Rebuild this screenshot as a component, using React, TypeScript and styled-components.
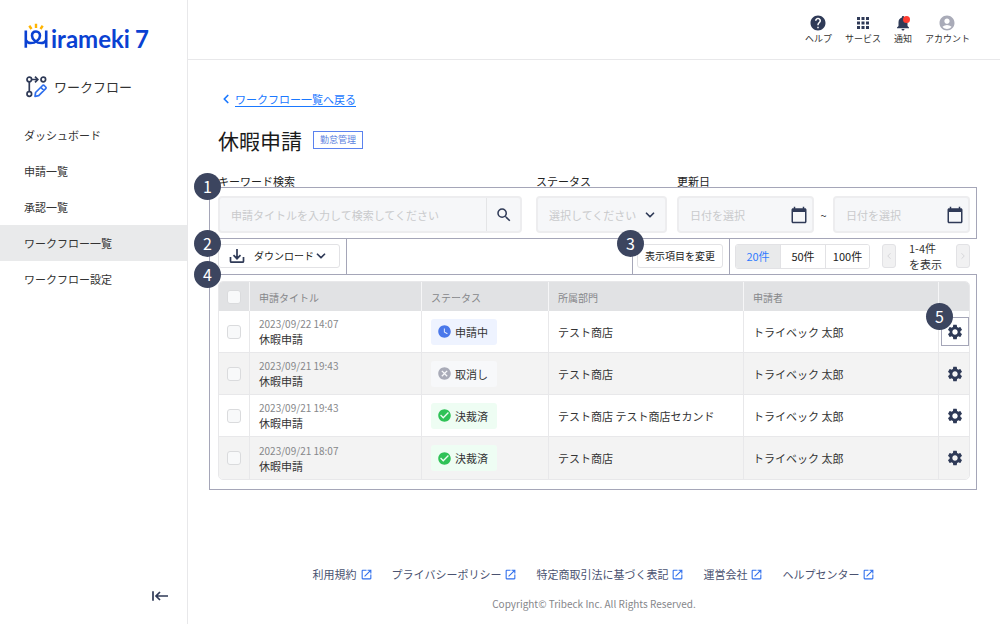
import React from 'react';
import styled, { createGlobalStyle } from 'styled-components';
import {
  MdAccountCircle,
  MdApps,
  MdCalendarToday,
  MdCancel,
  MdCheckCircle,
  MdHelp,
  MdNotifications,
  MdOpenInNew,
  MdSearch,
  MdSettings,
  MdWatchLater,
} from 'react-icons/md';
import { ChevronDown, ChevronLeft, ChevronRight } from 'lucide-react';

const navy = '#2f3a57';
const line = '#e8e8ea';
const blue = '#2f6fed';

const GlobalStyle = createGlobalStyle`
  *, *::before, *::after { box-sizing: border-box; }
  body {
    margin: 0;
    background: #fff;
    color: #333;
    font-family: "Noto Sans CJK JP", "Noto Sans", sans-serif;
    font-size: 11px;
    line-height: 16px;
  }
  button, input, select { font: inherit; color: inherit; margin: 0; }
  button { cursor: pointer; padding: 0; }
  svg { display: block; flex: none; }
`;

const Page = styled.div`
  display: flex;
  min-height: 100vh;
`;

/* Sidebar */

const Sidebar = styled.aside`
  flex: none;
  width: 188px;
  display: flex;
  flex-direction: column;
  border-right: 1px solid ${line};
`;

const Logo = styled.a`
  display: flex;
  align-items: flex-end;
  height: 50px;
  padding-left: 23px;
  color: #0a41d2;
  text-decoration: none;
`;

const Wordmark = styled.span`
  display: flex;
  gap: 5px;
  padding-left: 1px;
  font-family: Lato, sans-serif;
  font-size: 24px;
  font-weight: 700;
  line-height: 22px;
`;

const AppName = styled.div`
  display: flex;
  align-items: center;
  gap: 7px;
  margin-top: 26px;
  padding-left: 26px;
  height: 22px;
  font-size: 13px;
`;

const Menu = styled.nav`
  margin-top: 19px;
  display: flex;
  flex-direction: column;
`;

const MenuItem = styled.a<{ $active?: boolean }>`
  padding: 10px 24px;
  color: #333;
  text-decoration: none;
  background: ${(p) => (p.$active ? '#e9eaeb' : 'transparent')};
`;

const Collapse = styled.button`
  align-self: flex-end;
  margin: auto 18px 20px 0;
  border: 0;
  background: none;
  color: ${navy};
`;

/* Main column */

const Main = styled.div`
  flex: 1;
  min-width: 0;
  display: flex;
  flex-direction: column;
`;

const Header = styled.header`
  display: flex;
  justify-content: flex-end;
  gap: 13px;
  height: 60px;
  padding: 14px 30px 0;
  border-bottom: 1px solid ${line};
`;

const HeaderButton = styled.button<{ $muted?: boolean }>`
  position: relative;
  display: flex;
  flex-direction: column;
  align-items: center;
  height: 34px;
  border: 0;
  background: none;
  font-size: 9px;
  line-height: 14px;
  & > svg { color: ${(p) => (p.$muted ? '#a9abb8' : navy)}; }
`;

const Dot = styled.span`
  position: absolute;
  top: 2px;
  right: 2px;
  width: 7px;
  height: 7px;
  border-radius: 50%;
  background: #ff3b30;
`;

const Content = styled.main`
  padding: 30px 30px 0;
`;

const BackLink = styled.a`
  display: flex;
  align-items: center;
  gap: 2px;
  width: max-content;
  padding-left: 1px;
  height: 18px;
  color: #1a78ff;
  text-decoration: none;
  span {
    text-decoration: underline;
    text-underline-offset: 2px;
  }
`;

const TitleRow = styled.div`
  display: flex;
  align-items: center;
  gap: 11px;
  margin-top: 17px;
`;

const Title = styled.h1`
  margin: 0;
  color: #1a1a1a;
  font-size: 21px;
  font-weight: 400;
  line-height: 30px;
`;

const Tag = styled.span`
  padding: 0 6px;
  border: 1px solid #5b82ee;
  color: #5b7fe0;
  font-size: 9px;
  line-height: 16px;
`;

/* Numbered callouts */

const Callout = styled.div<{ $inset: string }>`
  position: absolute;
  inset: ${(p) => p.$inset};
  z-index: 1;
  border: 1px solid #a5a6b8;
  pointer-events: none;
`;

const CalloutNumber = styled.span<{ $top: number }>`
  position: absolute;
  top: ${(p) => p.$top}px;
  left: -16px;
  z-index: 2;
  width: 27px;
  height: 27px;
  border-radius: 50%;
  background: #3c455f;
  color: #fff;
  font-size: 16px;
  line-height: 26px;
  text-align: center;
`;

/* Filters */

const Filters = styled.form`
  position: relative;
  display: grid;
  grid-template-columns: 308fr 131fr 293fr;
  column-gap: 10px;
  margin-top: 18px;
`;

const Field = styled.div<{ $gapAfter?: number }>`
  display: flex;
  flex-direction: column;
  gap: 7px;
  min-width: 0;
  margin-right: ${(p) => p.$gapAfter ?? 0}px;
`;

const Label = styled.label`
  color: #222;
`;

const Box = styled.div`
  position: relative;
  display: flex;
  align-items: center;
  flex: 1;
  min-width: 0;
  height: 37px;
  border: 2px solid #ededef;
  border-radius: 4px;
  background: #f6f7f9;
`;

const TextInput = styled.input`
  flex: 1;
  min-width: 0;
  height: 100%;
  padding: 0 11px;
  border: 0;
  outline: 0;
  background: none;
  &::placeholder { color: #c9cacc; opacity: 1; }
`;

const SearchButton = styled.button`
  display: grid;
  place-items: center;
  width: 34px;
  height: 100%;
  border: 0;
  border-left: 1px solid #e4e5e7;
  background: none;
  color: ${navy};
`;

const CalendarButton = styled.button`
  padding: 0 4px;
  border: 0;
  background: none;
  color: ${navy};
`;

const Select = styled.select`
  appearance: none;
  width: 100%;
  height: 100%;
  padding: 0 26px 0 11px;
  border: 0;
  outline: 0;
  background: none;
  color: #c9cacc;
`;

const SelectArrow = styled.span`
  position: absolute;
  right: 8px;
  color: ${navy};
  pointer-events: none;
`;

const DateRange = styled.div`
  display: flex;
  align-items: center;
`;

const Tilde = styled.span`
  width: 19px;
  text-align: center;
`;

/* Toolbar */

const Toolbar = styled.div`
  display: flex;
  align-items: center;
  gap: 12px;
  margin-top: 7px;
  height: 32px;
`;

const ToolSlot = styled.div<{ $push?: boolean }>`
  position: relative;
  margin-right: ${(p) => (p.$push ? 'auto' : '0')};
`;

const ToolButton = styled.button<{ $pad: string }>`
  display: flex;
  align-items: center;
  height: 24px;
  padding: ${(p) => p.$pad};
  border: 1px solid #e2e2e5;
  border-radius: 3px;
  background: #fff;
  color: #222;
  font-size: 10px;
  svg { color: ${navy}; }
`;

const ButtonText = styled.span`
  padding-left: 9px;
`;

const Segments = styled.div`
  display: flex;
  border: 1px solid #e2e2e5;
  border-radius: 3px;
  overflow: hidden;
`;

const Segment = styled.button<{ $on?: boolean }>`
  width: 45px;
  height: 23px;
  border: 0;
  background: ${(p) => (p.$on ? '#e9eaeb' : '#fff')};
  color: ${(p) => (p.$on ? '#2f7bff' : '#222')};
  &:first-child, &:last-child { width: 44px; }
  & + & { border-left: 1px solid #e2e2e5; }
`;

const Pager = styled.div`
  display: flex;
  align-items: center;
  gap: 13px;
`;

const PageButton = styled.button`
  display: grid;
  place-items: center;
  width: 14px;
  height: 24px;
  border: 1px solid #e2e2e5;
  border-radius: 3px;
  background: #f1f1f2;
  color: #d0d0d4;
`;

const PageText = styled.span`
  width: 34px;
`;

/* Table */

const TableArea = styled.div`
  position: relative;
  margin-top: 9px;
`;

const Table = styled.table`
  width: 100%;
  table-layout: fixed;
  border-collapse: separate;
  border-spacing: 0;
  border: 1px solid ${line};
  border-radius: 5px;
  overflow: hidden;
`;

const Th = styled.th`
  height: 29px;
  padding: 3px 9px 0;
  background: #e1e2e4;
  color: #86878a;
  font-size: 10px;
  font-weight: 400;
  text-align: left;
  &:first-child { padding: 1px 8px 0; }
  & + & { border-left: 1px solid #f6f6f7; }
`;

const Tr = styled.tr`
  &:nth-child(even) { background: #f3f3f3; }
`;

const Td = styled.td`
  height: 42px;
  padding: 0 9px;
  border-bottom: 1px solid ${line};
  &:first-child { padding: 0 8px; }
  tr:last-child > & { border-bottom: 0; }
  & + & { border-left: 1px solid ${line}; }
`;

const Stamp = styled.div`
  color: #86878a;
  font-size: 10px;
  line-height: 15px;
`;

const Checkbox = styled.input`
  appearance: none;
  display: block;
  width: 14px;
  height: 14px;
  margin: 0;
  border: 1px solid #dadbdd;
  border-radius: 3px;
  background: #f8f9fa;
`;

const Status = styled.span<{ $bg: string; $fg: string }>`
  display: flex;
  align-items: center;
  gap: 3px;
  width: 66px;
  height: 26px;
  padding-left: 6px;
  border-radius: 3px;
  background: ${(p) => p.$bg};
  svg { color: ${(p) => p.$fg}; }
`;

const GearCell = styled(Td)`
  padding: 0 0 0 2px;
`;

const GearButton = styled.button`
  position: relative;
  display: grid;
  place-items: center;
  width: 28px;
  height: 29px;
  border: 0;
  background: none;
  color: ${navy};
`;

/* Footer */

const Footer = styled.footer`
  display: flex;
  flex-direction: column;
  align-items: center;
  gap: 14px;
  margin-top: auto;
  padding: 24px 0 12px;
  color: #85868a;
  font-size: 10px;
`;

const FooterLinks = styled.nav`
  display: flex;
  gap: 19px;
`;

const FooterLink = styled.a`
  display: flex;
  align-items: center;
  gap: 3px;
  color: #4a5270;
  font-size: 11px;
  text-decoration: none;
  svg { color: ${blue}; }
`;

const LogoMark = () => (
  <svg width="27" height="27" viewBox="-1 0 27 27" fill="none" strokeWidth="2.600" aria-hidden="true">
    <path stroke="#0a41d2" d="M1.800 7.500v17.200M22.200 7.500v17.200" />
    <path
      stroke="#0a41d2"
      d="M2 17.300c1 1.800 2.600 2.700 4.600 2.700 5 0 9.400-3.600 9.400-7.300 0-2.600-1.700-4.200-4-4.200s-4 1.600-4 4.200c0 3.700 4.400 7.300 9.400 7.300 2 0 3.600-.900 4.600-2.700"
    />
    <path stroke="#ffb400" strokeWidth="2.400" d="M5.300 2.800l2.200 3.200M12 .700v4.200M18.700 2.800l-2.200 3.200" />
  </svg>
);

const WorkflowIcon = () => (
  <svg width="21" height="22" viewBox="0 0 21 22" fill="none" stroke={navy} strokeWidth="1.700" aria-hidden="true">
    <circle cx="3.300" cy="3.500" r="2.300" />
    <circle cx="17.300" cy="3.500" r="2.300" />
    <circle cx="3.300" cy="18" r="2.300" />
    <path d="M3.300 5.800v9.900M5.600 3.500h6M9 .700l2.800 2.800-2.800 2.800" />
    <path stroke={blue} strokeLinejoin="round" d="M9 20.300l.600-3.800 7-7q.800-.700 1.600 0l1.500 1.500q.800.800 0 1.600l-7 7zM14.800 11.300l3.200 3.200" />
  </svg>
);

const CollapseIcon = () => (
  <svg width="18" height="16" viewBox="0 0 18 16" fill="none" stroke="currentColor" strokeWidth="1.700" aria-hidden="true">
    <path d="M2 3.300v9.400M5 8h12M9 4L5 8l4 4" />
  </svg>
);

const statuses = {
  pending: { text: '申請中', bg: '#eef3ff', fg: '#4a78ea', Icon: MdWatchLater },
  cancelled: { text: '取消し', bg: '#f7f8fa', fg: '#a9abb8', Icon: MdCancel },
  approved: { text: '決裁済', bg: '#eefdf3', fg: '#2fc257', Icon: MdCheckCircle },
};

const rows: { time: string; status: keyof typeof statuses; dept: string }[] = [
  { time: '2023/09/22 14:07', status: 'pending', dept: 'テスト商店' },
  { time: '2023/09/21 19:43', status: 'cancelled', dept: 'テスト商店' },
  { time: '2023/09/21 19:43', status: 'approved', dept: 'テスト商店 テスト商店セカンド' },
  { time: '2023/09/21 18:07', status: 'approved', dept: 'テスト商店' },
];

const menu = ['ダッシュボード', '申請一覧', '承認一覧', 'ワークフロー一覧', 'ワークフロー設定'];
const footerLinks = ['利用規約', 'プライバシーポリシー', '特定商取引法に基づく表記', '運営会社', 'ヘルプセンター'];

const DateField = ({ id, label }: { id: string; label?: string }) => (
  <Box>
    <TextInput id={id} size={1} placeholder="日付を選択" aria-label={label} />
    <CalendarButton type="button" aria-label="カレンダー">
      <MdCalendarToday size={18} />
    </CalendarButton>
  </Box>
);

export default function App() {
  return (
    <Page>
      <GlobalStyle />
      <Sidebar>
        <Logo href="#">
          <LogoMark />
          <Wordmark>
            <span>irameki</span>
            <span>7</span>
          </Wordmark>
        </Logo>
        <AppName>
          <WorkflowIcon />
          ワークフロー
        </AppName>
        <Menu>
          {menu.map((m) => (
            <MenuItem key={m} href="#" $active={m === 'ワークフロー一覧'}>
              {m}
            </MenuItem>
          ))}
        </Menu>
        <Collapse type="button" aria-label="メニューを閉じる">
          <CollapseIcon />
        </Collapse>
      </Sidebar>

      <Main>
        <Header>
          <HeaderButton>
            <MdHelp size={18} />
            ヘルプ
          </HeaderButton>
          <HeaderButton>
            <MdApps size={18} />
            サービス
          </HeaderButton>
          <HeaderButton>
            <MdNotifications size={18} />
            <Dot />
            通知
          </HeaderButton>
          <HeaderButton $muted>
            <MdAccountCircle size={18} />
            アカウント
          </HeaderButton>
        </Header>

        <Content>
          <BackLink href="#">
            <ChevronLeft size={14} strokeWidth={3} />
            <span>ワークフロー一覧へ戻る</span>
          </BackLink>
          <TitleRow>
            <Title>休暇申請</Title>
            <Tag>勤怠管理</Tag>
          </TitleRow>

          <Filters onSubmit={(e) => e.preventDefault()}>
            <Field $gapAfter={4}>
              <Label htmlFor="keyword">キーワード検索</Label>
              <Box>
                <TextInput id="keyword" placeholder="申請タイトルを入力して検索してください" />
                <SearchButton aria-label="検索">
                  <MdSearch size={18} />
                </SearchButton>
              </Box>
            </Field>
            <Field>
              <Label htmlFor="status">ステータス</Label>
              <Box>
                <Select id="status">
                  <option>選択してください</option>
                </Select>
                <SelectArrow>
                  <ChevronDown size={14} strokeWidth={3} />
                </SelectArrow>
              </Box>
            </Field>
            <Field>
              <Label htmlFor="from">更新日</Label>
              <DateRange>
                <DateField id="from" />
                <Tilde>~</Tilde>
                <DateField id="to" label="更新日（終了）" />
              </DateRange>
            </Field>
            <Callout $inset="14px -7px -6px -9px">
              <CalloutNumber $top={-15}>1</CalloutNumber>
            </Callout>
          </Filters>

          <Toolbar>
            <ToolSlot $push>
              <ToolButton $pad="0 11px 0 10px">
                <svg width="16" height="16" viewBox="0 0 16 16" fill="none" stroke="currentColor" strokeWidth="1.700" aria-hidden="true">
                  <path d="M8 1v9.500M4.500 7.200L8 10.700l3.500-3.500M1.500 9v4.200q0 1 1 1h11q1 0 1-1V9" />
                </svg>
                <ButtonText>ダウンロード</ButtonText>
                <ChevronDown size={14} strokeWidth={3} />
              </ToolButton>
              <Callout $inset="-6px -7px -7px -9px">
                <CalloutNumber $top={-9}>2</CalloutNumber>
              </Callout>
            </ToolSlot>
            <ToolSlot>
              <ToolButton $pad="0 7px">表示項目を変更</ToolButton>
              <Callout $inset="-6px -7px -7px -5px">
                <CalloutNumber $top={-9}>3</CalloutNumber>
              </Callout>
            </ToolSlot>
            <Segments>
              <Segment $on>20件</Segment>
              <Segment>50件</Segment>
              <Segment>100件</Segment>
            </Segments>
            <Pager>
              <PageButton aria-label="前へ">
                <ChevronLeft size={10} />
              </PageButton>
              <PageText>1-4件 を表示</PageText>
              <PageButton aria-label="次へ">
                <ChevronRight size={10} />
              </PageButton>
            </Pager>
          </Toolbar>

          <TableArea>
            <Table>
              <colgroup>
                <col width="30" />
                <col width="172" />
                <col width="127" />
                <col width="195" />
                <col width="195" />
                <col width="31" />
              </colgroup>
              <thead>
                <tr>
                  <Th>
                    <Checkbox type="checkbox" aria-label="すべて選択" />
                  </Th>
                  <Th>申請タイトル</Th>
                  <Th>ステータス</Th>
                  <Th>所属部門</Th>
                  <Th>申請者</Th>
                  <Th aria-label="設定" />
                </tr>
              </thead>
              <tbody>
                {rows.map((r, i) => {
                  const s = statuses[r.status];
                  return (
                    <Tr key={i}>
                      <Td>
                        <Checkbox type="checkbox" aria-label={`${r.time} 休暇申請`} />
                      </Td>
                      <Td>
                        <Stamp>{r.time}</Stamp>
                        休暇申請
                      </Td>
                      <Td>
                        <Status $bg={s.bg} $fg={s.fg}>
                          <s.Icon size={15} />
                          {s.text}
                        </Status>
                      </Td>
                      <Td>{r.dept}</Td>
                      <Td>トライベック 太郎</Td>
                      <GearCell>
                        <GearButton aria-label="設定">
                          <MdSettings size={18} />
                          {i === 0 && (
                            <Callout as="span" $inset="0">
                              <CalloutNumber $top={-15}>5</CalloutNumber>
                            </Callout>
                          )}
                        </GearButton>
                      </GearCell>
                    </Tr>
                  );
                })}
              </tbody>
            </Table>
            <Callout $inset="-7px -7px -10px -9px">
              <CalloutNumber $top={-14}>4</CalloutNumber>
            </Callout>
          </TableArea>
        </Content>

        <Footer>
          <FooterLinks>
            {footerLinks.map((f) => (
              <FooterLink key={f} href="#">
                {f}
                <MdOpenInNew size={13} />
              </FooterLink>
            ))}
          </FooterLinks>
          <span>Copyright© Tribeck Inc. All Rights Reserved.</span>
        </Footer>
      </Main>
    </Page>
  );
}
